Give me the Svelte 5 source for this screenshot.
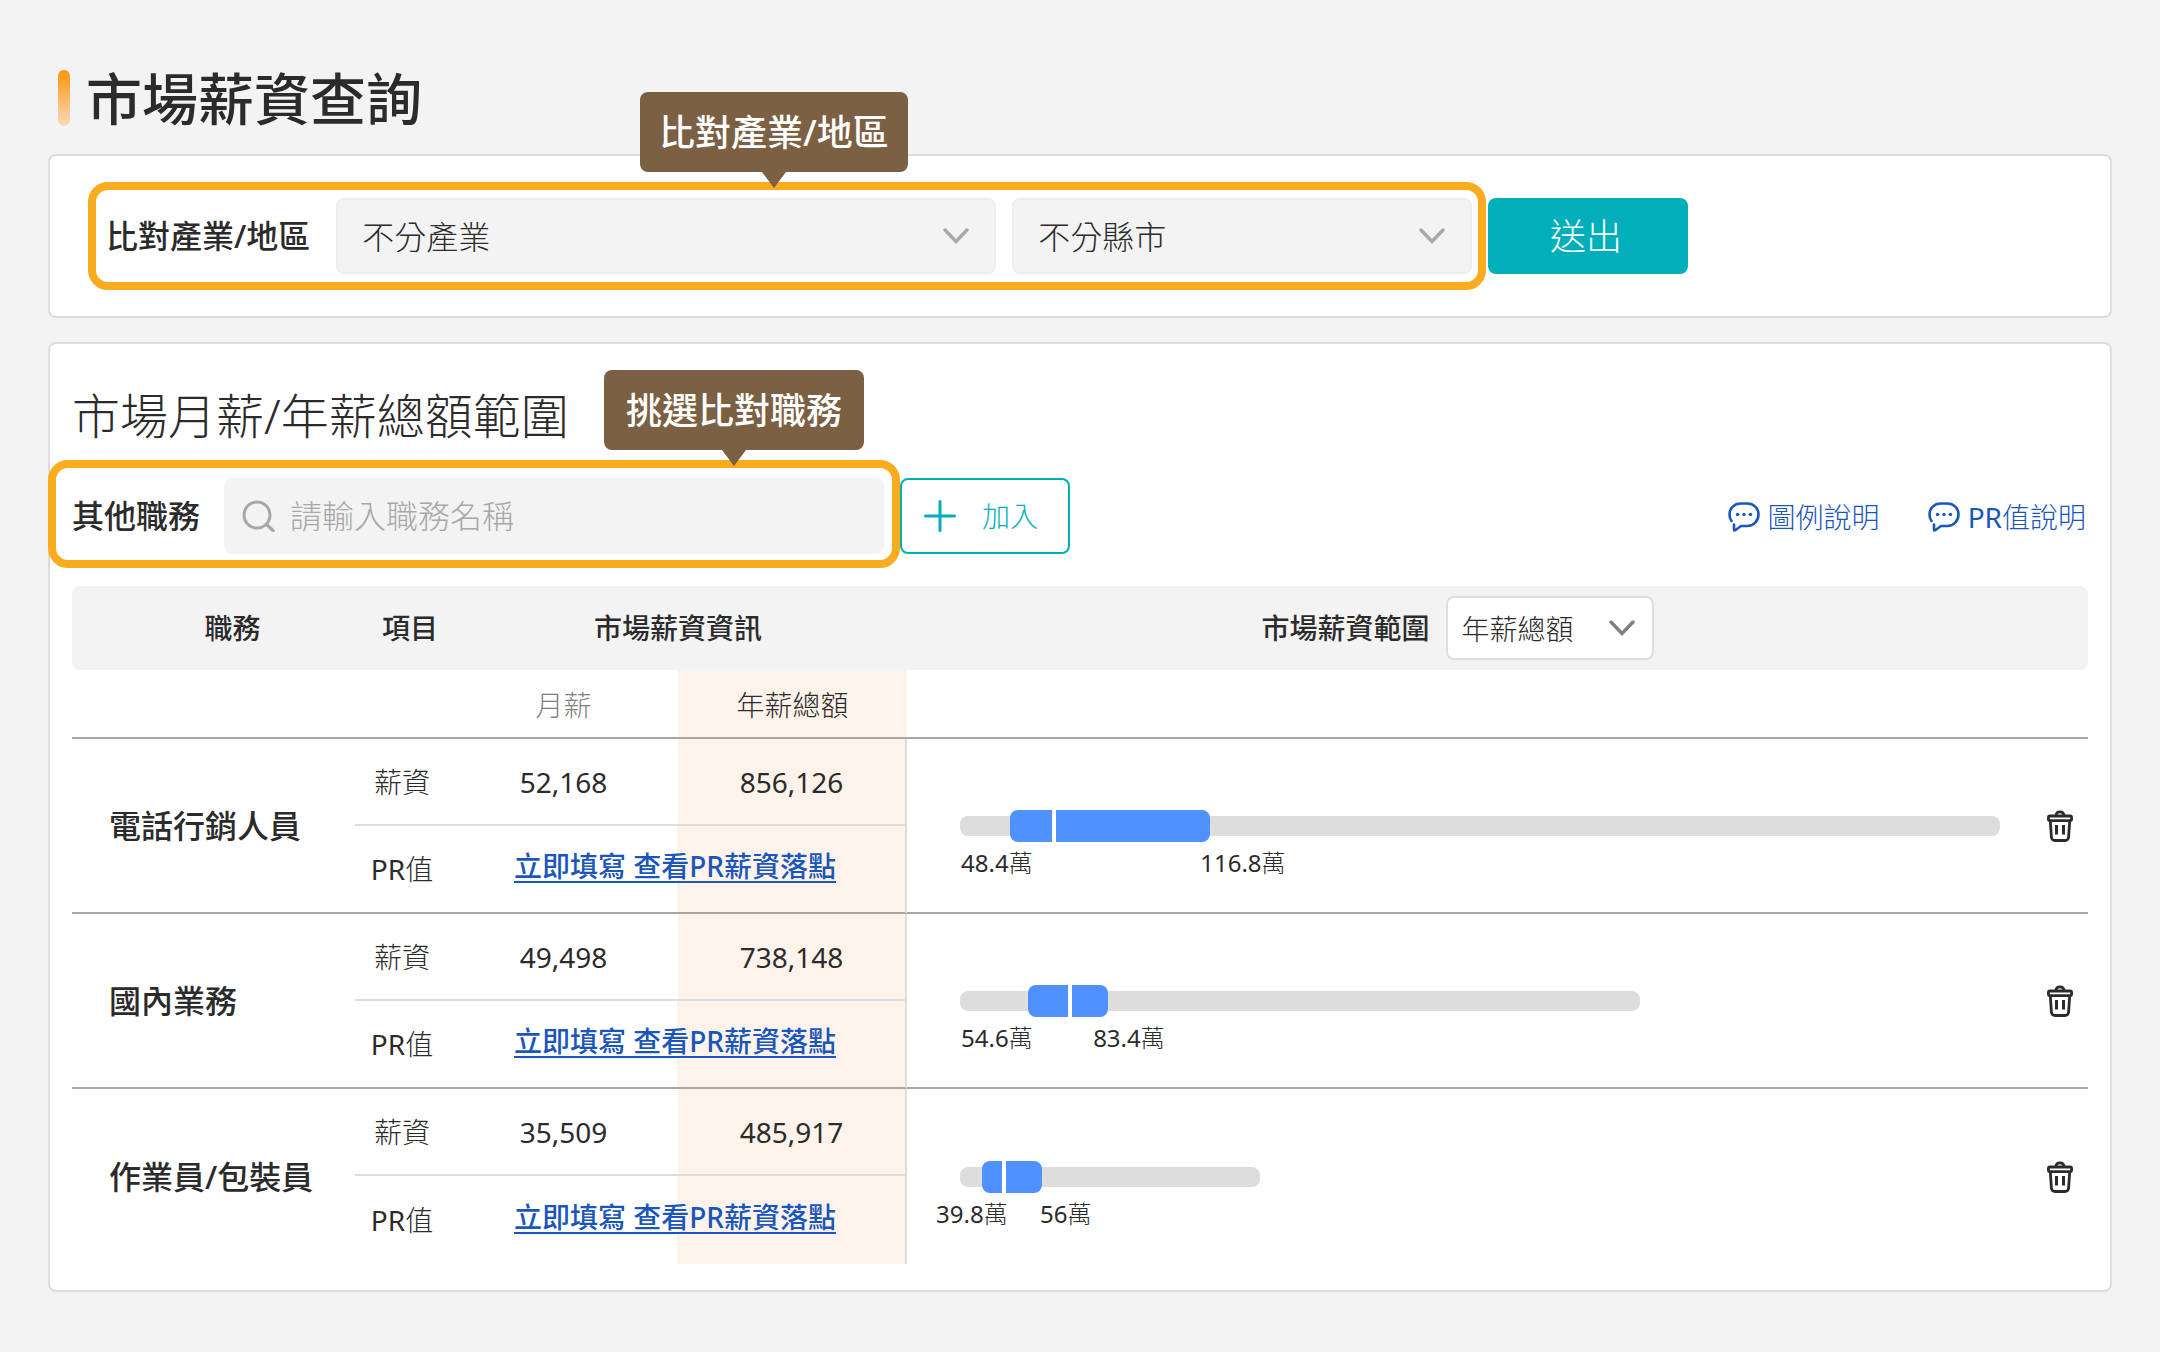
<script>
	let industry = $state('不分產業');
	let region = $state('不分縣市');
	let keyword = $state('');
	let rangeType = $state('年薪總額');

	/**
	 * `track`, `from`, `mid` and `to` are positions on the shared scale, in
	 * thousandths of the longest track. `low` / `high` carry their own label spot.
	 */
	let jobs = $state([
		{
			name: '電話行銷人員',
			monthly: '52,168',
			yearly: '856,126',
			track: 1000,
			from: 48,
			mid: 88,
			to: 240,
			low: { value: '48.4', at: 1 },
			high: { value: '116.8', at: 231 }
		},
		{
			name: '國內業務',
			monthly: '49,498',
			yearly: '738,148',
			track: 654,
			from: 65,
			mid: 104,
			to: 142,
			low: { value: '54.6', at: 1 },
			high: { value: '83.4', at: 128 }
		},
		{
			name: '作業員/包裝員',
			monthly: '35,509',
			yearly: '485,917',
			track: 288,
			from: 21,
			mid: 40,
			to: 79,
			low: { value: '39.8', at: -23 },
			high: { value: '56', at: 77 }
		}
	]);

	const pct = (n) => `${n / 10}%`;

	function remove(job) {
		jobs = jobs.filter((j) => j !== job);
	}
</script>

{#snippet chevron()}
	<svg class="chevron" viewBox="0 0 26 16" aria-hidden="true">
		<path d="M2 2l11 11.500L24 2" fill="none" stroke="currentColor" stroke-width="3.400" stroke-linecap="round" />
	</svg>
{/snippet}

{#snippet bubble()}
	<svg class="bubble" viewBox="0 0 32 30" aria-hidden="true">
		<path
			d="M3.500 19C2 17 1.500 15 1.500 12.500C1.500 6 6.500 1.500 12.500 1.500H19.500C25.500 1.500 30.500 6 30.500 12.500S25.500 24 19.500 24H13L7.200 28.200C6.500 28.600 6 28.500 6 27.700V22.500"
			fill="none"
			stroke="currentColor"
			stroke-width="2.600"
			stroke-linecap="round"
			stroke-linejoin="round"
		/>
		<circle cx="9.500" cy="12.500" r="1.700" fill="currentColor" />
		<circle cx="16" cy="12.500" r="1.700" fill="currentColor" />
		<circle cx="22.500" cy="12.500" r="1.700" fill="currentColor" />
	</svg>
{/snippet}

<main>
	<h1>市場薪資查詢</h1>

	<section class="card filters">
		<div class="highlight compare">
			<span class="tip compare-tip" role="tooltip">比對產業/地區</span>
			<label for="industry">比對產業/地區</label>
			<div class="select industry">
				<select id="industry" bind:value={industry}>
					<option>不分產業</option>
				</select>
				{@render chevron()}
			</div>
			<div class="select region">
				<select aria-label="縣市" bind:value={region}>
					<option>不分縣市</option>
				</select>
				{@render chevron()}
			</div>
		</div>
		<button class="submit" type="button">送出</button>
	</section>

	<section class="card result">
		<h2>市場月薪/年薪總額範圍</h2>

		<div class="toolbar">
			<div class="highlight other">
				<span class="tip other-tip" role="tooltip">挑選比對職務</span>
				<label for="keyword">其他職務</label>
				<div class="search">
					<svg viewBox="0 0 34 32" aria-hidden="true">
						<circle cx="15" cy="15" r="13" fill="none" stroke="currentColor" stroke-width="3" />
						<path d="M24.500 24.500L31 30.500" stroke="currentColor" stroke-width="3.400" stroke-linecap="round" />
					</svg>
					<input id="keyword" type="text" placeholder="請輸入職務名稱" bind:value={keyword} />
				</div>
			</div>
			<button class="add" type="button">
				<svg viewBox="0 0 32 32" aria-hidden="true">
					<path d="M16 1.500V30.500M1.500 16H30.500" stroke="currentColor" stroke-width="3" stroke-linecap="round" />
				</svg>
				加入
			</button>
			<nav>
				<a href="#legend">{@render bubble()}圖例說明</a>
				<a href="#pr">{@render bubble()}<span><span class="latin">PR</span>值說明</span></a>
			</nav>
		</div>

		<table>
			<colgroup>
				<col class="col-name" />
				<col class="col-item" />
				<col class="col-pay" />
				<col class="col-pay" />
				<col />
				<col class="col-remove" />
			</colgroup>
			<thead>
				<tr class="head">
					<th class="head-name">職務</th>
					<th class="head-item">項目</th>
					<th colspan="2">市場薪資資訊</th>
					<th>
						<div class="range-head">
							<label for="range-type">市場薪資範圍</label>
							<div class="select range-type">
								<select id="range-type" bind:value={rangeType}>
									<option>年薪總額</option>
								</select>
								{@render chevron()}
							</div>
						</div>
					</th>
					<td></td>
				</tr>
				<tr class="subhead">
					<td colspan="2"></td>
					<th class="muted">月薪</th>
					<th class="peach">年薪總額</th>
					<td colspan="2"></td>
				</tr>
			</thead>
			<tbody>
				{#each jobs as job (job.name)}
					<tr class="pay">
						<th class="name" rowspan="2" scope="rowgroup">{job.name}</th>
						<td>薪資</td>
						<td class="num">{job.monthly}</td>
						<td class="num peach edge">{job.yearly}</td>
						<td class="range" rowspan="2">
							<div class="chart">
								<div class="track" style:width={pct(job.track)}></div>
								<div class="span" style:left={pct(job.from)} style:width={pct(job.to - job.from)}></div>
								<div class="mid" style:left={pct(job.mid)}></div>
								{#each [job.low, job.high] as tick}
									<span class="tick" style:left={pct(tick.at)}><span class="latin">{tick.value}</span>萬</span>
								{/each}
							</div>
						</td>
						<td class="remove" rowspan="2">
							<button type="button" aria-label="刪除" onclick={() => remove(job)}>
								<svg viewBox="0 0 26 32" aria-hidden="true">
									<g fill="none" stroke="currentColor" stroke-width="2.800" stroke-linejoin="round">
										<path d="M9 6C9 3 10.500 1.800 13 1.800S17 3 17 6" />
										<rect x="1.400" y="6" width="23.200" height="4.600" rx="1.500" />
										<path d="M3.300 11L4.400 27C4.600 29.500 5.800 30.500 8 30.500H18C20.200 30.500 21.400 29.500 21.600 27L22.700 11" />
									</g>
									<path d="M9.500 15V24.500M16.500 15V24.500" stroke="currentColor" stroke-width="3" />
								</svg>
							</button>
						</td>
					</tr>
					<tr class="pr">
						<td><span class="latin">PR</span>值</td>
						<td class="half-peach edge" colspan="2"><a href="#fill">立即填寫 查看PR薪資落點</a></td>
					</tr>
				{/each}
			</tbody>
		</table>
	</section>
</main>

<style>
	:global(body) {
		background: #f3f3f3;
	}

	main {
		padding: 70px 48px 60px;
		color: #2b2b2b;
		font-family: 'Noto Sans', 'Noto Sans CJK TC', sans-serif;
		font-size: 28px;
		font-weight: 300;
		line-height: 40px;
	}

	main,
	main * {
		box-sizing: border-box;
	}

	h1,
	h2 {
		margin: 0;
	}

	h1 {
		display: flex;
		align-items: center;
		gap: 16px;
		margin: 0 0 28px 10px;
		font-size: 56px;
		font-weight: 500;
		line-height: 56px;
	}

	h1::before {
		content: '';
		width: 12px;
		height: 56px;
		border-radius: 6px;
		background: linear-gradient(#ff9408, #fbd9b8);
	}

	h2 {
		margin-bottom: 14px;
		font-size: 48px;
		font-weight: 300;
		line-height: 60px;
	}

	button,
	input,
	select {
		font: inherit;
		color: inherit;
	}

	button {
		padding: 0;
		cursor: pointer;
	}

	.latin,
	.num {
		font-weight: 400;
	}

	.card {
		border: 2px solid #ddd;
		border-radius: 8px;
		background: #fff;
	}

	.filters {
		display: flex;
		align-items: center;
		gap: 2px;
		margin-bottom: 24px;
		padding: 26px 38px;
	}

	.result {
		padding: 42px 22px 26px;
	}

	/* Orange frame round the controls that a tip points at. */
	.highlight {
		position: relative;
		display: flex;
		align-items: center;
		border: 8px solid #f8ac1e;
		border-radius: 20px;
	}

	.highlight label {
		flex: none;
		margin-right: 24px;
		font-size: 32px;
		font-weight: 500;
	}

	.highlight.compare label {
		margin-right: 26px;
	}

	.compare {
		flex: 0 1 1398px;
		padding: 8px 6px 8px 10px;
	}

	.other {
		flex: 0 1 852px;
		margin-left: -24px;
		padding: 10px 8px 6px 16px;
	}

	.tip {
		position: absolute;
		bottom: calc(100% + 18px);
		min-width: 260px;
		padding: 21px 19px 19px;
		border-radius: 8px;
		background: #7c6044;
		color: #fff;
		font-size: 36px;
		font-weight: 500;
		text-align: center;
		white-space: nowrap;
	}

	.tip::after {
		content: '';
		position: absolute;
		top: 100%;
		left: 50%;
		margin-left: -12px;
		border: solid transparent;
		border-width: 16px 12px 0;
		border-top-color: #7c6044;
	}

	.compare-tip {
		left: 544px;
	}

	.other-tip {
		left: 548px;
	}

	.select {
		position: relative;
		color: #2b2b2b;
	}

	.select select {
		display: block;
		width: 100%;
		height: 76px;
		padding: 2px 24px 0;
		border: 2px solid #ededed;
		border-radius: 8px;
		background: #f3f3f3;
		font-size: 32px;
		appearance: none;
	}

	.chevron {
		position: absolute;
		top: 50%;
		right: 27px;
		width: 26px;
		height: 16px;
		margin-top: -8px;
		color: #a8a8a8;
		pointer-events: none;
	}

	.industry {
		flex: 66 1 0;
		margin-right: 16px;
	}

	.region {
		flex: 46 1 0;
	}

	.submit {
		width: 200px;
		height: 76px;
		padding: 2px 4px 0 0;
		border: 0;
		border-radius: 8px;
		background: #00afb9;
		color: #fff;
		font-size: 36px;
	}

	.toolbar {
		display: flex;
		align-items: center;
		margin-bottom: 18px;
	}

	.search {
		display: flex;
		flex: 1;
		align-items: center;
		gap: 14px;
		height: 76px;
		padding: 0 18px;
		border-radius: 8px;
		background: #f3f3f3;
		font-size: 32px;
	}

	.search svg {
		width: 34px;
		height: 32px;
		color: #a8a8a8;
	}

	.search input {
		flex: 1;
		min-width: 0;
		padding: 0;
		border: 0;
		outline: 0;
		background: none;
	}

	.search input::placeholder {
		color: #a8a8a8;
		opacity: 1;
	}

	.add {
		display: flex;
		align-items: center;
		justify-content: center;
		gap: 26px;
		width: 170px;
		height: 76px;
		margin-top: 4px;
		padding-right: 8px;
		border: 2px solid #00afb9;
		border-radius: 8px;
		background: #fff;
		color: #00afb9;
	}

	.add svg {
		width: 32px;
		height: 32px;
	}

	nav {
		display: flex;
		gap: 48px;
		margin: 6px 2px 0 auto;
	}

	nav a {
		display: flex;
		align-items: center;
		gap: 8px;
		color: #1a56bb;
		text-decoration: none;
	}

	.bubble {
		width: 32px;
		height: 30px;
	}

	table {
		width: 100%;
		border-spacing: 0;
		table-layout: fixed;
	}

	.col-name {
		width: 283px;
	}

	.col-item {
		width: 94px;
	}

	.col-pay {
		width: 229px;
	}

	.col-remove {
		width: 78px;
	}

	th,
	td {
		padding: 0;
		text-align: center;
	}

	.head > * {
		height: 84px;
		background: #f3f3f3;
		font-weight: 500;
	}

	.head > :first-child {
		border-radius: 8px 0 0 8px;
	}

	.head > :last-child {
		border-radius: 0 8px 8px 0;
	}

	.head-name {
		padding-left: 38px;
	}

	.head-item {
		padding-left: 16px;
	}

	.range-head {
		display: flex;
		align-items: center;
		justify-content: center;
		gap: 16px;
		padding-right: 2px;
	}

	.range-type {
		width: 208px;
	}

	.range-type select {
		height: 64px;
		padding: 2px 14px 0;
		border-color: #ddd;
		background: #fff;
		font-size: 28px;
		font-weight: 300;
	}

	.range-type .chevron {
		right: 19px;
		color: #808080;
	}

	.subhead > * {
		height: 69px;
		padding-top: 2px;
		border-bottom: 2px solid #a8a8a8;
		font-weight: 300;
	}

	.muted {
		color: #808080;
	}

	.pay > td {
		height: 87px;
		border-bottom: 2px solid #ddd;
	}

	.pr > td {
		height: 88px;
	}

	.pr > td,
	.pay > [rowspan] {
		border-bottom: 2px solid #a8a8a8;
	}

	tbody tr:last-child > td,
	tbody tr:nth-last-child(2) > [rowspan] {
		border-bottom: 0;
	}

	.peach {
		background: #fef3ea;
	}

	/* The link cell spans both pay columns, only the second one is tinted. */
	.half-peach {
		padding: 0 4px 6px 0;
		background: linear-gradient(to right, transparent 50%, #fef3ea 50%);
	}

	.pay > .edge,
	.pr > .edge {
		border-right: 2px solid #ddd;
	}

	.name {
		padding-left: 37px;
		font-size: 32px;
		font-weight: 500;
		text-align: left;
	}

	.pr a {
		color: #1a56bb;
		font-weight: 500;
		text-decoration-thickness: 2px;
		text-underline-offset: 4px;
	}

	.range {
		padding: 0 10px 0 53px;
	}

	.chart {
		position: relative;
	}

	.track {
		height: 20px;
		border-radius: 8px;
		background: #ddd;
	}

	.span,
	.mid {
		position: absolute;
		top: -6px;
		height: 32px;
	}

	.span {
		border-radius: 8px;
		background: #4f91ff;
	}

	.mid {
		width: 4px;
		background: #fff;
	}

	.tick {
		position: absolute;
		top: 27px;
		font-size: 24px;
		white-space: nowrap;
	}

	.remove {
		padding-right: 15px;
	}

	.remove button {
		display: block;
		margin-left: auto;
		border: 0;
		background: none;
	}

	.remove svg {
		display: block;
		width: 26px;
		height: 32px;
	}
</style>
